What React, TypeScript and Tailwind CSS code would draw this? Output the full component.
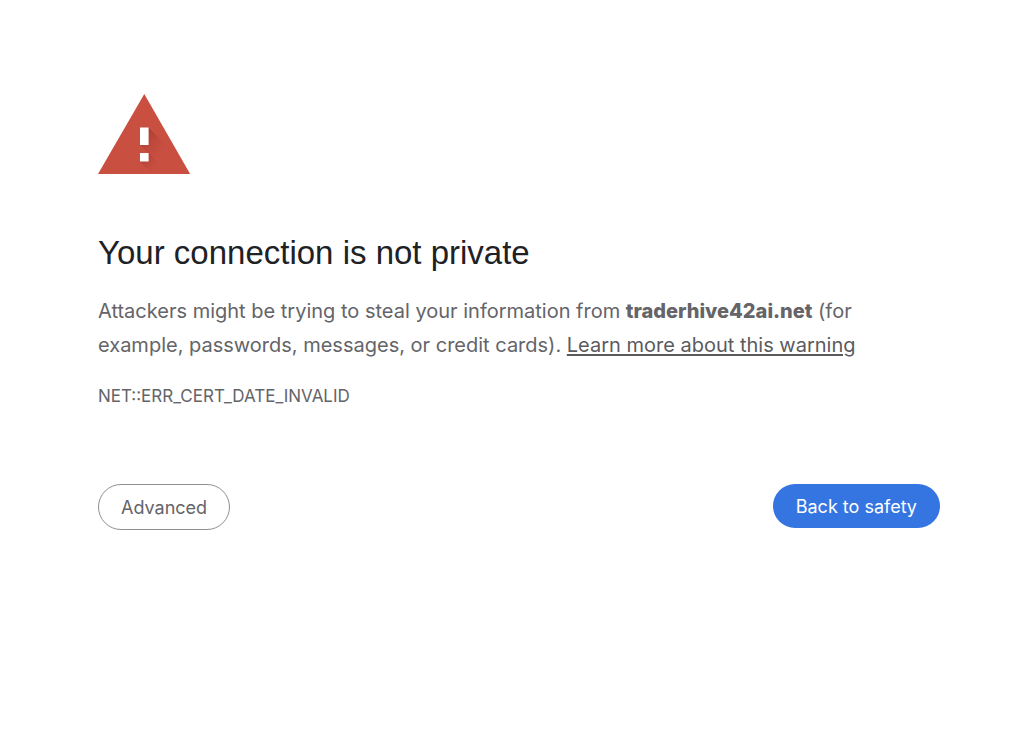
function WarningIcon() {
  return (
    <svg viewBox="0 0 92 80" className="h-20 w-[92px]" aria-hidden>
      <defs>
        <linearGradient id="shade" gradientUnits="userSpaceOnUse" x1="46" y1="42" x2="68" y2="64">
          <stop offset="0" stopColor="#a83c31" stopOpacity="0.8" />
          <stop offset="1" stopColor="#c94f41" stopOpacity="0" />
        </linearGradient>
        <linearGradient id="shade-dot" gradientUnits="userSpaceOnUse" x1="46" y1="62" x2="60" y2="76">
          <stop offset="0" stopColor="#a83c31" stopOpacity="0.8" />
          <stop offset="1" stopColor="#c94f41" stopOpacity="0.1" />
        </linearGradient>
      </defs>
      <path d="M46.3 0 92.2 80H0Z" fill="#c94f41" />
      <path d="M50.6 33.5 68 51 92 80H71L42 51Z" fill="url(#shade)" />
      <path d="M50.6 59 71.6 80H54.5L42 67.5Z" fill="url(#shade-dot)" />
      <path d="M42 33.5h8.6V51H42zM42 59h8.6v8.5H42z" fill="#fff" />
    </svg>
  );
}

export default function App() {
  return (
    <main className="min-h-screen bg-white pt-[94px] pr-[84px] pb-10 pl-[98px] font-['Inter',sans-serif] text-[#646469]">
      <WarningIcon />
      <h1 className="mt-14 font-['Liberation_Sans',sans-serif] text-[33px] leading-[46px] text-[#202124]">
        Your connection is not private
      </h1>
      <p className="mt-[18px] max-w-[800px] text-[20px] leading-[34px]">
        Attackers might be trying to steal your information from{" "}
        <strong className="font-extrabold">traderhive42ai.net</strong> (for example, passwords,
        messages, or credit cards).{" "}
        <a href="#learn-more" className="text-[#5b5b5e] underline decoration-2 underline-offset-2">
          Learn more about this warning
        </a>
      </p>
      <p className="mt-[22px] text-[17px] leading-6">NET::ERR_CERT_DATE_INVALID</p>
      <div className="mt-[76px] flex items-start justify-between">
        <button className="h-[46px] rounded-full border border-[#8f8f93] px-[22px] text-[18px]">
          Advanced
        </button>
        <button className="h-11 rounded-full bg-[#3575e2] px-[23px] text-[18px] text-white">
          Back to safety
        </button>
      </div>
    </main>
  );
}
